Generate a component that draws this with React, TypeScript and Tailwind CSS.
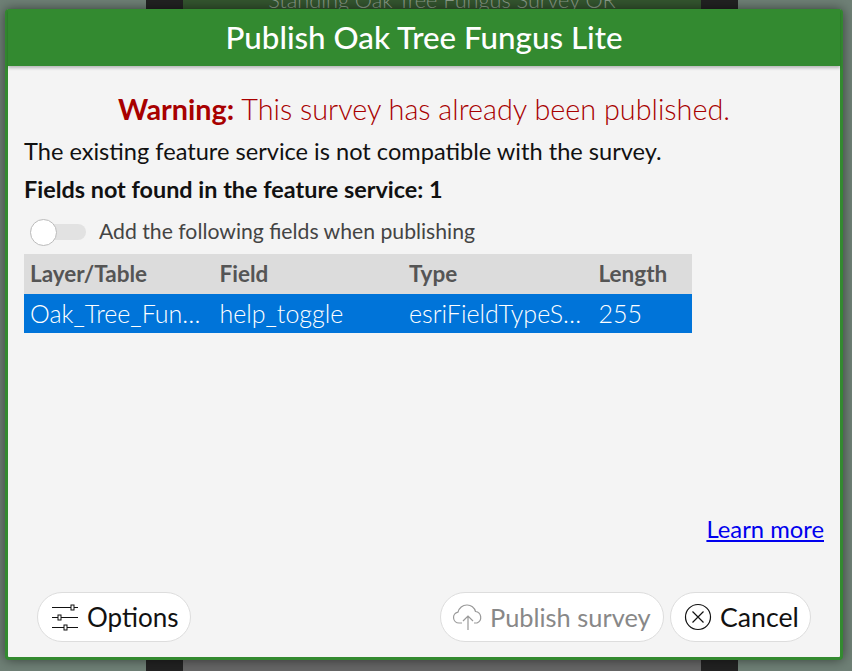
function OptionsIcon() {
  return (
    <svg width="28" height="28" viewBox="0 0 28 28" fill="none" stroke="#111" strokeWidth="1">
      <path d="M1 4.5h26M1 14.5h26M1 24.5h26" />
      <rect x="20" y="2" width="3" height="5" fill="#fff" />
      <rect x="7" y="12" width="3" height="5" fill="#fff" />
      <rect x="13" y="22" width="3" height="5" fill="#fff" />
    </svg>
  );
}

function CloudIcon() {
  return (
    <svg width="32" height="28" viewBox="0 0 32 28" fill="none" stroke="#999" strokeWidth="1.2">
      <path d="M10 20H7a5.5 5.5 0 0 1-1-10.9A9 9 0 0 1 15 2a8.5 8.5 0 0 1 8.5 6.5A6 6 0 0 1 25 20h-3" />
      <path d="M16 27V13M11 18l5-5 5 5" />
    </svg>
  );
}

function CancelIcon() {
  return (
    <svg width="28" height="28" viewBox="0 0 28 28" fill="none" stroke="#111" strokeWidth="1.2">
      <circle cx="14" cy="14" r="12.5" />
      <path d="M8.5 8.5l11 11M19.5 8.5l-11 11" />
    </svg>
  );
}

const columns = ["Layer/Table", "Field", "Type", "Length"];
const row = ["Oak_Tree_Fun…", "help_toggle", "esriFieldTypeS…", "255"];

export default function App() {
  return (
    <div className="relative h-[671px] w-[852px] overflow-hidden bg-[#6f8076] font-['Lato',sans-serif]">
      {/* page behind the dialog */}
      <div className="absolute left-[146px] top-0 h-[671px] w-[592px] overflow-hidden bg-[#222]">
        <div className="mx-[37px] h-full bg-[#34552f] text-center">
          <div className="h-[9px] text-[21.7px] font-light leading-[0px] text-[#8a9a88]">Standing Oak Tree Fungus Survey OR</div>
          <div className="absolute bottom-0 left-[37px] h-[11px] w-[518px] bg-[#666]"></div>
        </div>
      </div>

      <div className="absolute left-[5px] top-[9px] flex h-[651px] w-[838px] flex-col rounded-[4px] border-x-[3px] border-b-[3px] border-[#338a30] bg-[#f4f4f4] shadow-[0_0_12px_rgba(0,0,0,0.5)]">
        <div className="flex h-[57px] shrink-0 items-center justify-center bg-[#338a30] text-[31.3px] font-medium text-white shadow-[0_2px_3px_rgba(0,0,0,0.25)]">
          Publish Oak Tree Fungus Lite
        </div>

        <div className="flex flex-1 flex-col px-[16px]">
          <div className="mt-[25px] text-center text-[28.8px] font-light leading-[36px] text-[#a80000]">
            <b className="font-bold">Warning:</b> This survey has already been published.
          </div>
          <div className="mt-[9px] text-[23.6px] leading-[30px] text-[#111]">
            The existing feature service is not compatible with the survey.
          </div>
          <div className="mt-[8px] text-[23.4px] font-bold leading-[30px] text-[#111]">
            Fields not found in the feature service: 1
          </div>
          <div className="mt-[13px] flex h-[30px] items-center">
            <div className="relative ml-[6px] h-[16px] w-[56px] rounded-full bg-[#e2e2e2]">
              <div className="absolute left-0 top-[-5px] h-[27px] w-[27px] rounded-full border border-[#bbb] bg-white"></div>
            </div>
            <span className="ml-[13px] text-[21.2px] text-[#444]">Add the following fields when publishing</span>
          </div>
          <div className="mt-[7px] w-[668px] overflow-hidden">
            <div className="grid h-[40px] grid-cols-[189.5px_189.5px_189.5px_99.5px] items-center bg-[#dcdcdc] text-[22.5px] font-bold text-[#555]">
              {columns.map((c) => (
                <div key={c} className="pl-[6px]">{c}</div>
              ))}
            </div>
            <div className="grid h-[39px] grid-cols-[189.5px_189.5px_189.5px_99.5px] items-center bg-[#0074d9] text-[25px] font-light text-white">
              {row.map((c) => (
                <div key={c} className="truncate pl-[6px]">{c}</div>
              ))}
            </div>
          </div>
          <div className="mt-auto text-right text-[23.8px] leading-[30px] text-[#0000ee] underline">Learn more</div>
          <div className="mb-[15px] mt-[48px] flex items-center px-[13px]">
            <div className="flex h-[50px] w-[154px] items-center gap-[8px] rounded-full border border-[#ddd] bg-white pl-[13px] text-[26px] text-[#111]">
              <OptionsIcon />
              Options
            </div>
            <div className="ml-auto flex h-[50px] w-[224px] items-center gap-[6px] rounded-full border border-[#ddd] bg-white pl-[11px] text-[25.4px] text-[#888]">
              <CloudIcon />
              Publish survey
            </div>
            <div className="ml-[6px] flex h-[50px] w-[141px] items-center gap-[8px] rounded-full border border-[#ddd] bg-white pl-[13px] text-[26.7px] text-[#111]">
              <CancelIcon />
              Cancel
            </div>
          </div>
        </div>
      </div>
    </div>
  );
}
